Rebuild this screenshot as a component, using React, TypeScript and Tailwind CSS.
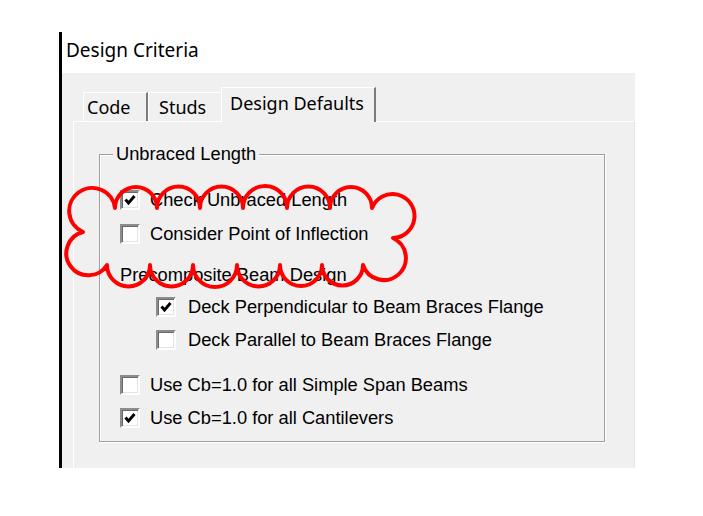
import React from 'react'

const Box = ({ checked }: { checked?: boolean }) => (
    <div className="w-[20px] h-[20px] shrink-0 bg-white border-2 border-t-[#8c8c8c] border-l-[#8c8c8c] border-b-white border-r-white shadow-[inset_1px_1px_0_#6a6a6a,inset_-1px_-1px_0_#e3e3e3] flex items-center justify-center">
        {checked && (
            <svg width="14" height="14" viewBox="0 0 14 14">
                <path d="M2.5 6.5 L5.5 10 L11.5 3" fill="none" stroke="#000" strokeWidth="2.8" />
            </svg>
        )}
    </div>
)

const Row = ({ label, checked, className = '', gap = 'gap-[10px]' }: any) => (
    <div className={`h-[32px] flex items-center ${gap} ${className}`}>
        <Box checked={checked} />
        <span className="text-[18.3px] leading-none text-black">{label}</span>
    </div>
)

const Cloud = () => (
    <svg className="absolute inset-0 pointer-events-none" width="703" height="516" viewBox="0 0 703 516">
        <path
            d="M83 232 A23 23 0 1 1 115 208 A20 20 0 0 1 157 208 A20 20 0 0 1 200 208 A20 20 0 0 1 243 208 A20 20 0 0 1 287 208 A20 20 0 0 1 330 208 A20 20 0 0 1 372 208 A22 22 0 1 1 393 238 A22 22 0 1 1 363 265 A20 20 0 0 1 322 265 A20 20 0 0 1 280 265 A20 20 0 0 1 237 265 A20 20 0 0 1 193 265 A20 20 0 0 1 150 265 A20 20 0 0 1 107 265 A22 22 0 1 1 83 232 Z"
            fill="none"
            stroke="#ff0000"
            strokeWidth="4"
            strokeLinejoin="round"
        />
    </svg>
)

export default function App() {
    return (
        <div className="relative w-[703px] h-[516px] bg-white overflow-hidden" style={{ fontFamily: '"Liberation Sans", Arial, sans-serif' }}>
            <div className="flex pt-[32px] pl-[59px]">
                <div className="w-[3px] h-[436px] bg-black" />
                <div className="w-[573px] flex flex-col">
                    <div className="h-[41px] flex items-center pl-[4px] pb-[5px]">
                        <span className="text-[19px] leading-none text-black" style={{ fontFamily: '"Noto Sans", sans-serif' }}>Design Criteria</span>
                    </div>
                    <div className="h-[395px] bg-[#f0f0f0] pt-[14px] pl-[11px] flex flex-col">
                        <div className="h-[34px] flex items-end pl-[10px]" style={{ fontFamily: '"Noto Sans", sans-serif' }}>
                            <div className="h-[29px] w-[65px] border-l border-t border-white border-r-2 border-r-[#7c7c7c] flex items-center pl-[3px] text-[18px] leading-none">Code</div>
                            <div className="h-[29px] w-[73px] border-l border-t border-white flex items-center pl-[10px] text-[18px] leading-none">Studs</div>
                            <div className="relative z-10 -mb-px h-[35px] w-[155px] bg-[#f0f0f0] border-l border-t border-white border-r-2 border-r-[#7c7c7c] flex items-center pl-[8px] pb-[5px] text-[18px] leading-none">Design Defaults</div>
                        </div>
                        <div className="flex-1 border-l border-t border-white border-r border-r-[#e6e6e6] pl-[25px] pt-[22px] pr-[29px]">
                            <fieldset className="border border-[#a0a0a0] shadow-[inset_1px_1px_0_#fff,1px_1px_0_#fff] pb-[7px]">
                                <legend className="ml-[13px] px-[3px] bg-[#f0f0f0] text-[18.3px] leading-[20px]">Unbraced Length</legend>
                                <div className="pt-[20px] pl-[20px]">
                                    <Row label="Check Unbraced Length" checked />
                                    <Row label="Consider Point of Inflection" className="mt-[2px]" />
                                    <div className="h-[32px] mt-[9px] flex items-center text-[18.3px] leading-none">Precomposite Beam Design</div>
                                    <div className="pl-[36px]">
                                        <Row label="Deck Perpendicular to Beam Braces Flange" checked gap="gap-[12px]" />
                                        <Row label="Deck Parallel to Beam Braces Flange" className="mt-px" gap="gap-[12px]" />
                                    </div>
                                    <Row label="Use Cb=1.0 for all Simple Span Beams" className="mt-[13px]" />
                                    <Row label="Use Cb=1.0 for all Cantilevers" className="mt-px" checked />
                                </div>
                            </fieldset>
                        </div>
                    </div>
                </div>
            </div>
            <Cloud />
        </div>
    )
}
